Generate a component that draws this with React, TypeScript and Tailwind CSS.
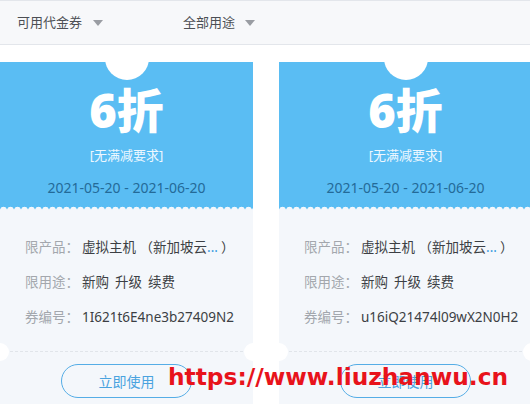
type Coupon = {
  discount: string
  rule: string
  period: string
  product: string
  usage: string[]
  code: string
}

const coupons: Coupon[] = [
  {
    discount: '6折',
    rule: '[无满减要求]',
    period: '2021-05-20 - 2021-06-20',
    product: '虚拟主机 （新加坡云',
    usage: ['新购', '升级', '续费'],
    code: '1I621t6E4ne3b27409N2',
  },
  {
    discount: '6折',
    rule: '[无满减要求]',
    period: '2021-05-20 - 2021-06-20',
    product: '虚拟主机 （新加坡云',
    usage: ['新购', '升级', '续费'],
    code: 'u16iQ21474l09wX2N0H2',
  },
]

function Caret() {
  return (
    <span className="inline-block w-0 h-0 border-l-[5px] border-r-[5px] border-t-[6px] border-l-transparent border-r-transparent border-t-[#9a9da3]" />
  )
}

function CouponCard({ coupon }: { coupon: Coupon }) {
  return (
    <div className="relative w-[253px] shrink-0 overflow-hidden">
      {/* top punch hole */}
      <div className="absolute left-1/2 -translate-x-1/2 -top-[26px] w-[44px] h-[44px] rounded-full bg-white" />

      {/* Blue head */}
      <div className="h-[144px] bg-[#5abdf3] flex flex-col items-center pt-[25px]">
        <div className="text-[47px] leading-[47px] font-black text-white">{coupon.discount}</div>
        <div className="mt-[11px] text-[13px] leading-[20px] text-[#eef8ff]">{coupon.rule}</div>
        <div className="mt-[13px] text-[14px] leading-[20px] text-[#246a98]">{coupon.period}</div>
      </div>
      {/* scalloped edge */}
      <div className="h-[4px] bg-[#5abdf3] bg-[radial-gradient(circle_at_50%_100%,#f4f7fb_3px,transparent_3.6px)] bg-[length:7px_4px] bg-repeat-x" />

      {/* Body */}
      <div className="bg-[#f4f7fb] pt-[27px] pb-[6px]">
        <div className="px-[25px] flex flex-col gap-[15px] text-[13.5px] leading-[20px]">
          <div className="flex">
            <span className="w-[57px] shrink-0 text-[#a3a7ad]">限产品：</span>
            <span className="text-[#3c3f44] whitespace-nowrap">
              {coupon.product}
              <span className="text-[#3a9be0]">...</span>
              <span className="ml-[3px]">）</span>
            </span>
          </div>
          <div className="flex">
            <span className="w-[57px] shrink-0 text-[#a3a7ad]">限用途：</span>
            <span className="text-[#3c3f44] flex gap-[6px]">
              {coupon.usage.map((u) => (
                <span key={u}>{u}</span>
              ))}
            </span>
          </div>
          <div className="flex">
            <span className="w-[57px] shrink-0 text-[#a3a7ad]">券编号：</span>
            <span className="text-[#3c3f44] font-['Noto_Sans',sans-serif]">{coupon.code}</span>
          </div>
        </div>

        {/* tear line with side notches */}
        <div className="relative mt-[24px] h-0 border-t border-dashed border-[#e1e5ea] mx-[10px]">
          <div className="absolute -left-[19px] -top-[9px] w-[18px] h-[18px] rounded-full bg-white" />
          <div className="absolute -right-[19px] -top-[9px] w-[18px] h-[18px] rounded-full bg-white" />
        </div>

        <div className="flex justify-center mt-[12px]">
          <button className="w-[131px] h-[34px] rounded-full border border-[#55ade6] text-[#4aa3df] text-[14px]">
            立即使用
          </button>
        </div>
      </div>
    </div>
  )
}

export default function App() {
  return (
    <div className="relative w-[530px] h-[416px] overflow-hidden bg-white font-['Noto_Sans','Noto_Sans_CJK_SC',sans-serif]">
      {/* Filter bar */}
      <div className="h-[45px] bg-[#f7f8fa] border-t border-b border-[#e3e6eb] flex items-center px-[17px] gap-[80px] text-[13px] text-[#4c4f54]">
        <div className="flex items-center gap-[11px]">
          <span>可用代金券</span>
          <Caret />
        </div>
        <div className="flex items-center gap-[10px]">
          <span>全部用途</span>
          <Caret />
        </div>
      </div>

      {/* Coupons */}
      <div className="flex gap-[26px] mt-[17px]">
        {coupons.map((c) => (
          <CouponCard key={c.code} coupon={c} />
        ))}
      </div>

      <div className="absolute left-[168px] top-[361px] text-[23.3px] leading-[32px] font-bold text-[#e8131b] font-['DejaVu_Sans',sans-serif] whitespace-nowrap">
        https://www.liuzhanwu.cn
      </div>
    </div>
  )
}
